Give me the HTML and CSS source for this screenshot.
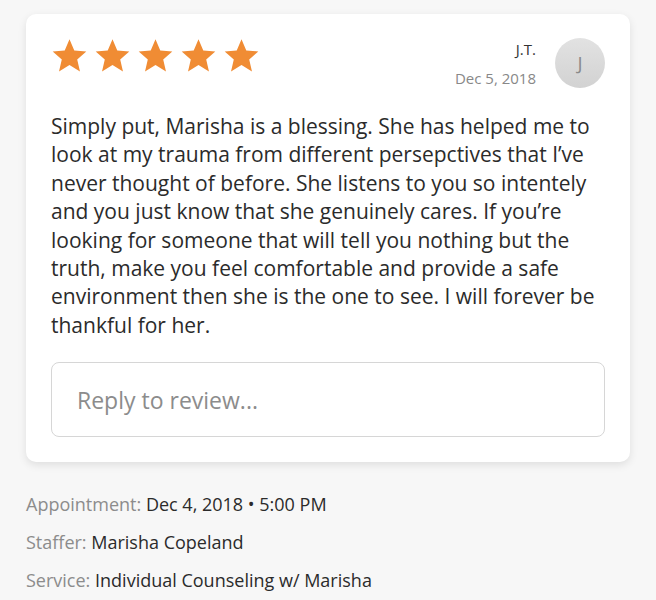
FILE: index.html
```html
<!DOCTYPE html>
<html>
<head>
<meta charset="utf-8">
<link rel="stylesheet" href="styles.css">
</head>
<body>
<div class="page">
  <div class="card">
    <div class="head">
      <div class="stars">
        <svg class="star" viewBox="0 0 24 24"><path d="M12 1.5l3.1 7.2 7.8.7-5.9 5.2 1.8 7.7L12 18.2l-6.8 4.1 1.8-7.7-5.9-5.2 7.8-.7z"/></svg>
        <svg class="star" viewBox="0 0 24 24"><path d="M12 1.5l3.1 7.2 7.8.7-5.9 5.2 1.8 7.7L12 18.2l-6.8 4.1 1.8-7.7-5.9-5.2 7.8-.7z"/></svg>
        <svg class="star" viewBox="0 0 24 24"><path d="M12 1.5l3.1 7.2 7.8.7-5.9 5.2 1.8 7.7L12 18.2l-6.8 4.1 1.8-7.7-5.9-5.2 7.8-.7z"/></svg>
        <svg class="star" viewBox="0 0 24 24"><path d="M12 1.5l3.1 7.2 7.8.7-5.9 5.2 1.8 7.7L12 18.2l-6.8 4.1 1.8-7.7-5.9-5.2 7.8-.7z"/></svg>
        <svg class="star" viewBox="0 0 24 24"><path d="M12 1.5l3.1 7.2 7.8.7-5.9 5.2 1.8 7.7L12 18.2l-6.8 4.1 1.8-7.7-5.9-5.2 7.8-.7z"/></svg>
      </div>
      <div class="author">
        <div class="meta">
          <div class="name">J.T.</div>
          <div class="date">Dec 5, 2018</div>
        </div>
        <div class="avatar">J</div>
      </div>
    </div>
    <p class="text">Simply put, Marisha is a blessing. She has helped me to look at my trauma from different persepctives that I’ve never thought of before. She listens to you so intentely and you just know that she genuinely cares. If you’re looking for someone that will tell you nothing but the truth, make you feel comfortable and provide a safe environment then she is the one to see. I will forever be thankful for her.</p>
    <div class="reply">Reply to review...</div>
  </div>
  <div class="info">
    <div class="row"><span class="label">Appointment:</span> <span class="value">Dec 4, 2018 • 5:00 PM</span></div>
    <div class="row"><span class="label">Staffer:</span> <span class="value">Marisha Copeland</span></div>
    <div class="row"><span class="label">Service:</span> <span class="value">Individual Counseling w/ Marisha</span></div>
  </div>
</div>
</body>
</html>
```

FILE: styles.css
```css
html, body {
  margin: 0;
  padding: 0;
  background: #f7f7f7;
}
body {
  font-family: "Open Sans", "Lato", sans-serif;
  color: #2b2b2b;
}
.page {
  padding: 14px 26px 0 26px;
}
.card {
  background: #fff;
  border-radius: 10px;
  box-shadow: 0 3px 8px rgba(0,0,0,0.10);
  padding: 22px 25px 25px 25px;
}
.head {
  display: flex;
  justify-content: space-between;
  align-items: flex-start;
}
.stars {
  display: flex;
  gap: 6px;
  margin-top: 1px;
}
.star {
  width: 37px;
  height: 37px;
  fill: #f08c34;
}
.author {
  display: flex;
  align-items: center;
  gap: 19px;
  margin-top: 2px;
}
.meta {
  text-align: right;
}
.name {
  font-size: 15px;
  color: #333;
  line-height: 20px;
}
.date {
  font-size: 15px;
  color: #888;
  line-height: 20px;
  margin-top: 9px;
}
.avatar {
  width: 50px;
  height: 50px;
  border-radius: 50%;
  background: linear-gradient(#e2e2e2, #d2d2d2);
  color: #8a8a8a;
  display: flex;
  align-items: center;
  justify-content: center;
  font-size: 19px;
}
.text {
  margin: 24px 0 0 0;
  font-size: 21px;
  line-height: 28.4px;
  color: #2b2b2b;
}
.reply {
  margin-top: 23px;
  height: 75px;
  border: 1px solid #d6d6d6;
  border-radius: 8px;
  box-sizing: border-box;
  padding: 0 25px;
  display: flex;
  align-items: center;
  font-size: 23px;
  color: #8c8c8c;
}
.info {
  padding-top: 31px;
}
.row {
  font-size: 18px;
  line-height: 22px;
  margin-bottom: 16px;
}
.label {
  color: #8c8c8c;
}
.value {
  color: #2b2b2b;
}
```
